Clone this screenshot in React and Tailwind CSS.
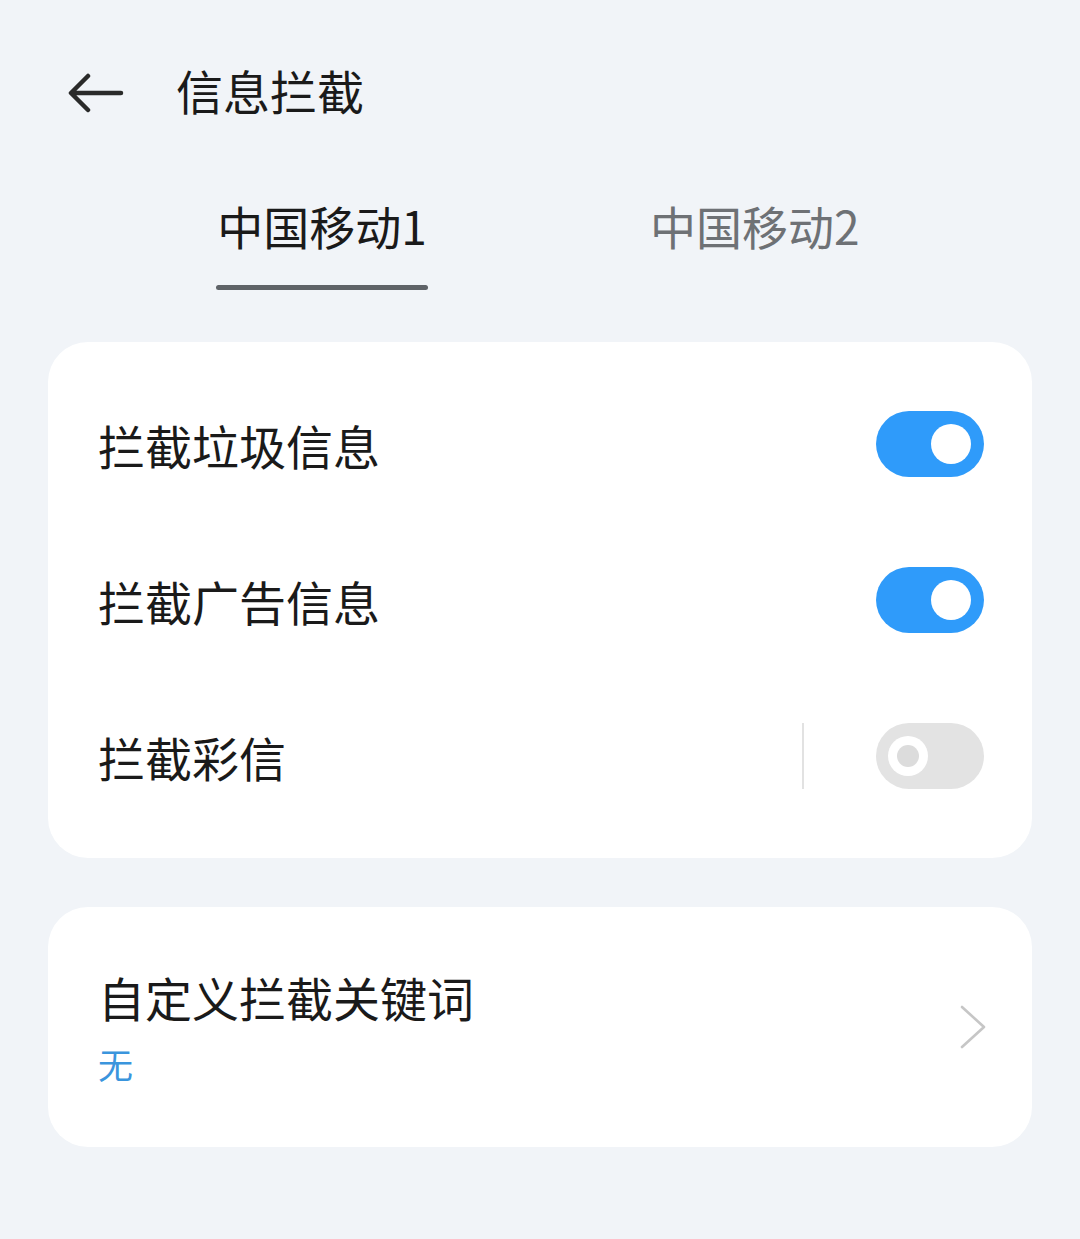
const FONT = { fontFamily: '"Noto Sans CJK SC", "Noto Sans", sans-serif' }

function Toggle({ on }) {
  if (on) {
    return (
      <div className="w-[108px] h-[66px] rounded-full bg-[#2f9bfa] flex items-center justify-end pr-[13px]">
        <span className="w-[40px] h-[40px] rounded-full bg-white" />
      </div>
    )
  }
  return (
    <div className="w-[108px] h-[66px] rounded-full bg-[#e3e3e3] flex items-center pl-[12px]">
      <span className="w-[40px] h-[40px] rounded-full bg-white flex items-center justify-center">
        <span className="w-[22px] h-[22px] rounded-full bg-[#dcdcdc]" />
      </span>
    </div>
  )
}

function SwitchRow({ label, on, divider }) {
  return (
    <div className="h-[156px] flex items-center justify-between pl-[50px] pr-[48px]">
      <span className="text-[47px] leading-none text-[#1a1a1a]">{label}</span>
      <div className="flex items-center">
        {divider && <span className="w-[2px] h-[66px] bg-[#e2e2e2] mr-[72px]" />}
        <Toggle on={on} />
      </div>
    </div>
  )
}

export default function App() {
  return (
    <div className="min-h-[1239px] w-[1080px] bg-[#f1f4f8]" style={FONT}>
      <div className="h-[186px] flex items-center pl-[68px]">
        <svg width="56" height="40" viewBox="0 0 56 40" fill="none" stroke="#2a2a2a" strokeWidth="4.5" strokeLinecap="round" strokeLinejoin="round">
          <path d="M53 20H4M20 3L3 20l17 17" />
        </svg>
        <span className="ml-[52px] -mt-[8px] text-[47px] leading-none text-[#1a1a1a]">信息拦截</span>
      </div>
      <div className="flex h-[156px]">
        <div className="w-[540px] flex justify-end pr-[112px]">
          <div className="flex flex-col items-center pt-[16px]">
            <span className="text-[46px] leading-none text-[#1a1a1a] whitespace-nowrap">中国移动1</span>
            <span className="mt-[37px] w-[212px] h-[5px] rounded-full bg-[#5f6368]" />
          </div>
        </div>
        <div className="w-[540px] flex pl-[110px] pt-[16px]">
          <span className="text-[46px] leading-none text-[#6e7175] whitespace-nowrap">中国移动2</span>
        </div>
      </div>
      <div className="px-[48px] flex flex-col gap-[49px]">
        <div className="bg-white rounded-[40px] py-[24px]">
          <SwitchRow label="拦截垃圾信息" on />
          <SwitchRow label="拦截广告信息" on />
          <SwitchRow label="拦截彩信" on={false} divider />
        </div>
        <div className="bg-white rounded-[40px] h-[240px] flex items-center justify-between pl-[50px] pr-[44px]">
          <div className="flex flex-col">
            <span className="text-[47px] leading-none text-[#1a1a1a]">自定义拦截关键词</span>
            <span className="mt-[26px] text-[35px] leading-none text-[#3a95dd]">无</span>
          </div>
          <svg width="30" height="46" viewBox="0 0 30 46" fill="none" stroke="#c6c6c6" strokeWidth="2.6" strokeLinecap="round" strokeLinejoin="round">
            <path d="M4 3l22 20L4 43" />
          </svg>
        </div>
      </div>
    </div>
  )
}
